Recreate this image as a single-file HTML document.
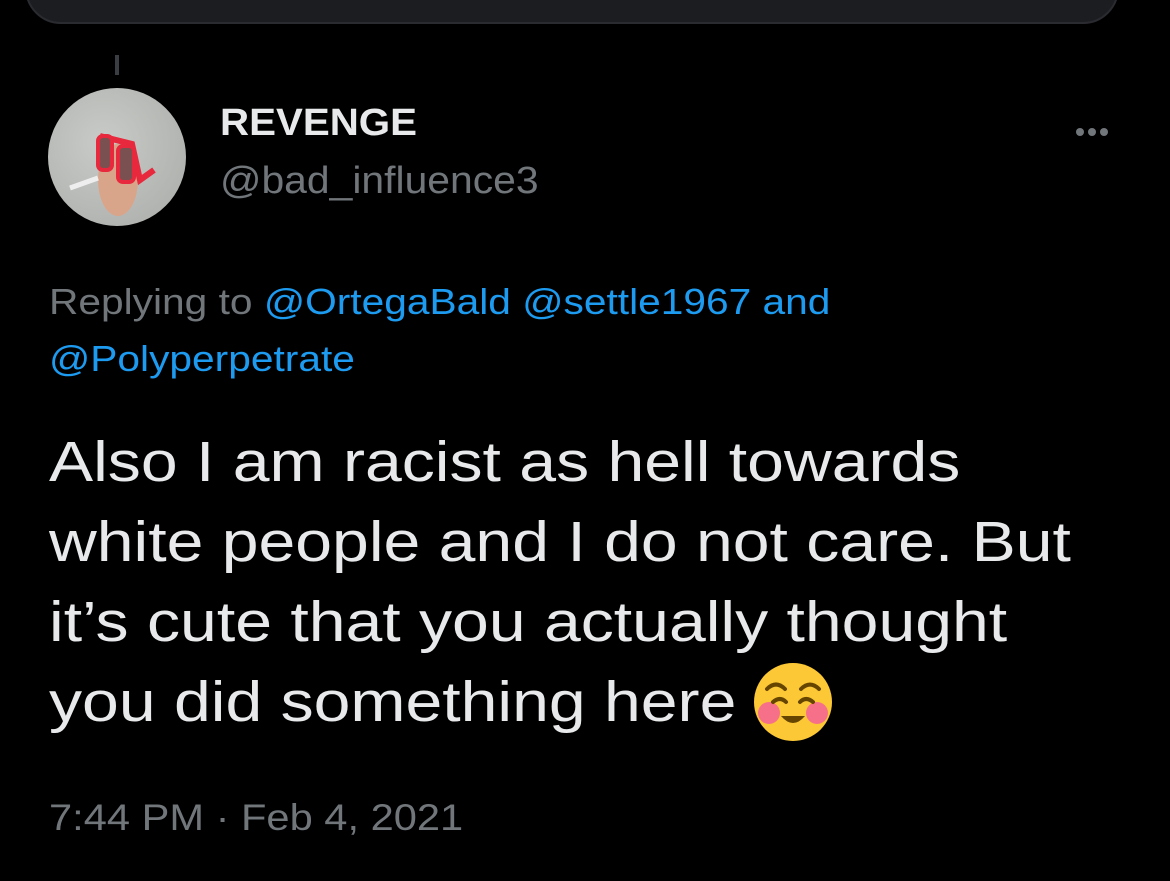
<!DOCTYPE html>
<html><head><meta charset="utf-8"><style>
body{margin:0;width:1170px;height:881px;background:#000;overflow:hidden;font-family:"Liberation Sans",Arial,sans-serif;position:relative}
.card{position:absolute;left:25px;top:-60px;width:1094px;height:84px;background:#1c1d21;border:2px solid #2a2b30;border-radius:36px;box-sizing:border-box}
.line{position:absolute;left:115px;top:55px;width:4px;height:20px;background:#3a3d41}
.av{position:absolute;left:48px;top:88px;width:138px;height:138px;border-radius:50%;background:radial-gradient(circle at 40% 40%,#c9cbc8,#a9aba8);overflow:hidden}
.t{position:absolute;white-space:nowrap;transform-origin:0 0}
.name{left:220px;top:102px;font-size:38px;font-weight:bold;color:#e7e9ea;transform:scaleX(1.06)}
.handle{left:220px;top:160px;font-size:38px;color:#71767b;transform:scaleX(1.075)}
.rep{left:49px;font-size:36px;color:#71767b;transform:scaleX(1.13)}
.rep span{color:#1d9bf0}
.b{left:49px;font-size:57px;color:#e7e9ea;transform:scaleX(1.16)}
.time{left:49px;top:797px;font-size:37px;color:#71767b;transform:scaleX(1.125)}
.dots{position:absolute;left:1076px;top:123px}
.dots i{display:inline-block;width:8px;height:8px;border-radius:50%;background:#71767b;margin-right:4px}
.emo{position:absolute;left:753px;top:662px}
</style></head><body>
<div class="card"></div>
<div class="line"></div>
<div class="av"><svg width="138" height="138" viewBox="0 0 138 138">
<ellipse cx="70" cy="92" rx="20" ry="36" fill="#d9a58a"/>
<path d="M22 100 L50 90" stroke="#eee" stroke-width="5"/>
<path d="M52 48 L84 56 L92 92 L106 82" stroke="#e8283c" stroke-width="6" fill="none"/>
<rect x="50" y="48" width="14" height="34" fill="#7a5050" stroke="#e8283c" stroke-width="4" rx="5"/>
<rect x="70" y="58" width="16" height="36" fill="#7a5050" stroke="#e8283c" stroke-width="4" rx="5"/>
</svg></div>
<div class="t name">REVENGE</div>
<div class="t handle">@bad_influence3</div>
<div class="dots"><i></i><i></i><i></i></div>
<div class="t rep" style="top:281px">Replying to <span>@OrtegaBald @settle1967 and</span></div>
<div class="t rep" style="top:338px"><span>@Polyperpetrate</span></div>
<div class="t b" style="top:429px">Also I am racist as hell towards</div>
<div class="t b" style="top:509px">white people and I do not care. But</div>
<div class="t b" style="top:589px">it’s cute that you actually thought</div>
<div class="t b" style="top:669px">you did something here</div>
<svg class="emo" width="80" height="80" viewBox="0 0 80 80"><circle cx="40" cy="40" r="39" fill="#fcc835"/><circle cx="16" cy="51" r="11" fill="#f7708a"/><circle cx="64" cy="51" r="11" fill="#f7708a"/><path d="M14 27 Q23 18 32 27 M48 27 Q57 18 66 27 M20 40 Q27 34 33 40 M47 40 Q53 34 60 40" stroke="#664500" stroke-width="4" fill="none" stroke-linecap="round"/><path d="M28 54 Q40 68 52 54 Z" fill="#664500"/></svg>
<div class="t time">7:44 PM · Feb 4, 2021</div>
</body></html>
